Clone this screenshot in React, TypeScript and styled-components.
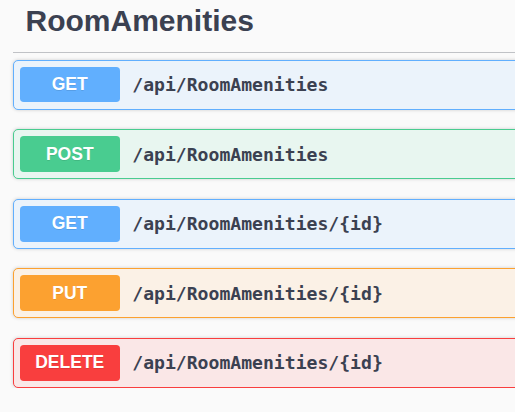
import React from "react";
import styled, { createGlobalStyle } from "styled-components";

const Global = createGlobalStyle`
  html, body {
    margin: 0;
    padding: 0;
    background: #fafafa;
    overflow: hidden;
  }
  body {
    font-family: "Liberation Sans", Arial, sans-serif;
    color: #3b4151;
  }
  *, *::before, *::after {
    box-sizing: border-box;
  }
`;

type Method = "get" | "post" | "put" | "delete";

const palette: Record<Method, { main: string; bg: string }> = {
  get: { main: "#61affe", bg: "#ebf3fb" },
  post: { main: "#49cc90", bg: "#e8f6f0" },
  put: { main: "#fca130", bg: "#fbf1e6" },
  delete: { main: "#f93e3e", bg: "#fae7e7" },
};

const Page = styled.div`
  width: 580px;
  padding-left: 12.5px;
`;

const TagHeading = styled.h3`
  margin: 0;
  height: 52.5px;
  padding: 3px 0 0 13px;
  font-family: "Liberation Sans", Arial, sans-serif;
  font-size: 30px;
  line-height: 36px;
  font-weight: 700;
  color: #3b4151;
  border-bottom: 1.5px solid rgba(59, 65, 81, 0.3);
`;

const OpList = styled.div`
  display: flex;
  flex-direction: column;
  gap: 19.6px;
  padding-top: 7px;
`;

const OpBlock = styled.div<{ $method: Method }>`
  display: flex;
  align-items: center;
  height: 50px;
  padding: 0 6.25px;
  border: 1.25px solid ${(p) => palette[p.$method].main};
  border-radius: 5px;
  background: ${(p) => palette[p.$method].bg};
  box-shadow: 0 0 3.75px rgba(0, 0, 0, 0.19);
`;

const MethodBadge = styled.span<{ $method: Method }>`
  display: flex;
  align-items: center;
  justify-content: center;
  flex: 0 0 100px;
  height: 35.7px;
  border-radius: 3.75px;
  background: ${(p) => palette[p.$method].main};
  color: #fff;
  font-family: "Liberation Sans", Arial, sans-serif;
  font-size: 17.5px;
  font-weight: 700;
  text-shadow: 0 1.25px 0 rgba(0, 0, 0, 0.1);
`;

const PathText = styled.span`
  padding: 0 12.5px;
  font-family: "DejaVu Sans Mono", "Liberation Mono", monospace;
  font-size: 18.1px;
  font-weight: 700;
  color: #3b4151;
  white-space: nowrap;
`;

const ops: { method: Method; path: string }[] = [
  { method: "get", path: "/api/RoomAmenities" },
  { method: "post", path: "/api/RoomAmenities" },
  { method: "get", path: "/api/RoomAmenities/{id}" },
  { method: "put", path: "/api/RoomAmenities/{id}" },
  { method: "delete", path: "/api/RoomAmenities/{id}" },
];

export default function App() {
  return (
    <>
      <Global />
      <Page>
        <TagHeading>RoomAmenities</TagHeading>
        <OpList>
          {ops.map((op, i) => (
            <OpBlock key={i} $method={op.method}>
              <MethodBadge $method={op.method}>{op.method.toUpperCase()}</MethodBadge>
              <PathText>{op.path}</PathText>
            </OpBlock>
          ))}
        </OpList>
      </Page>
    </>
  );
}
